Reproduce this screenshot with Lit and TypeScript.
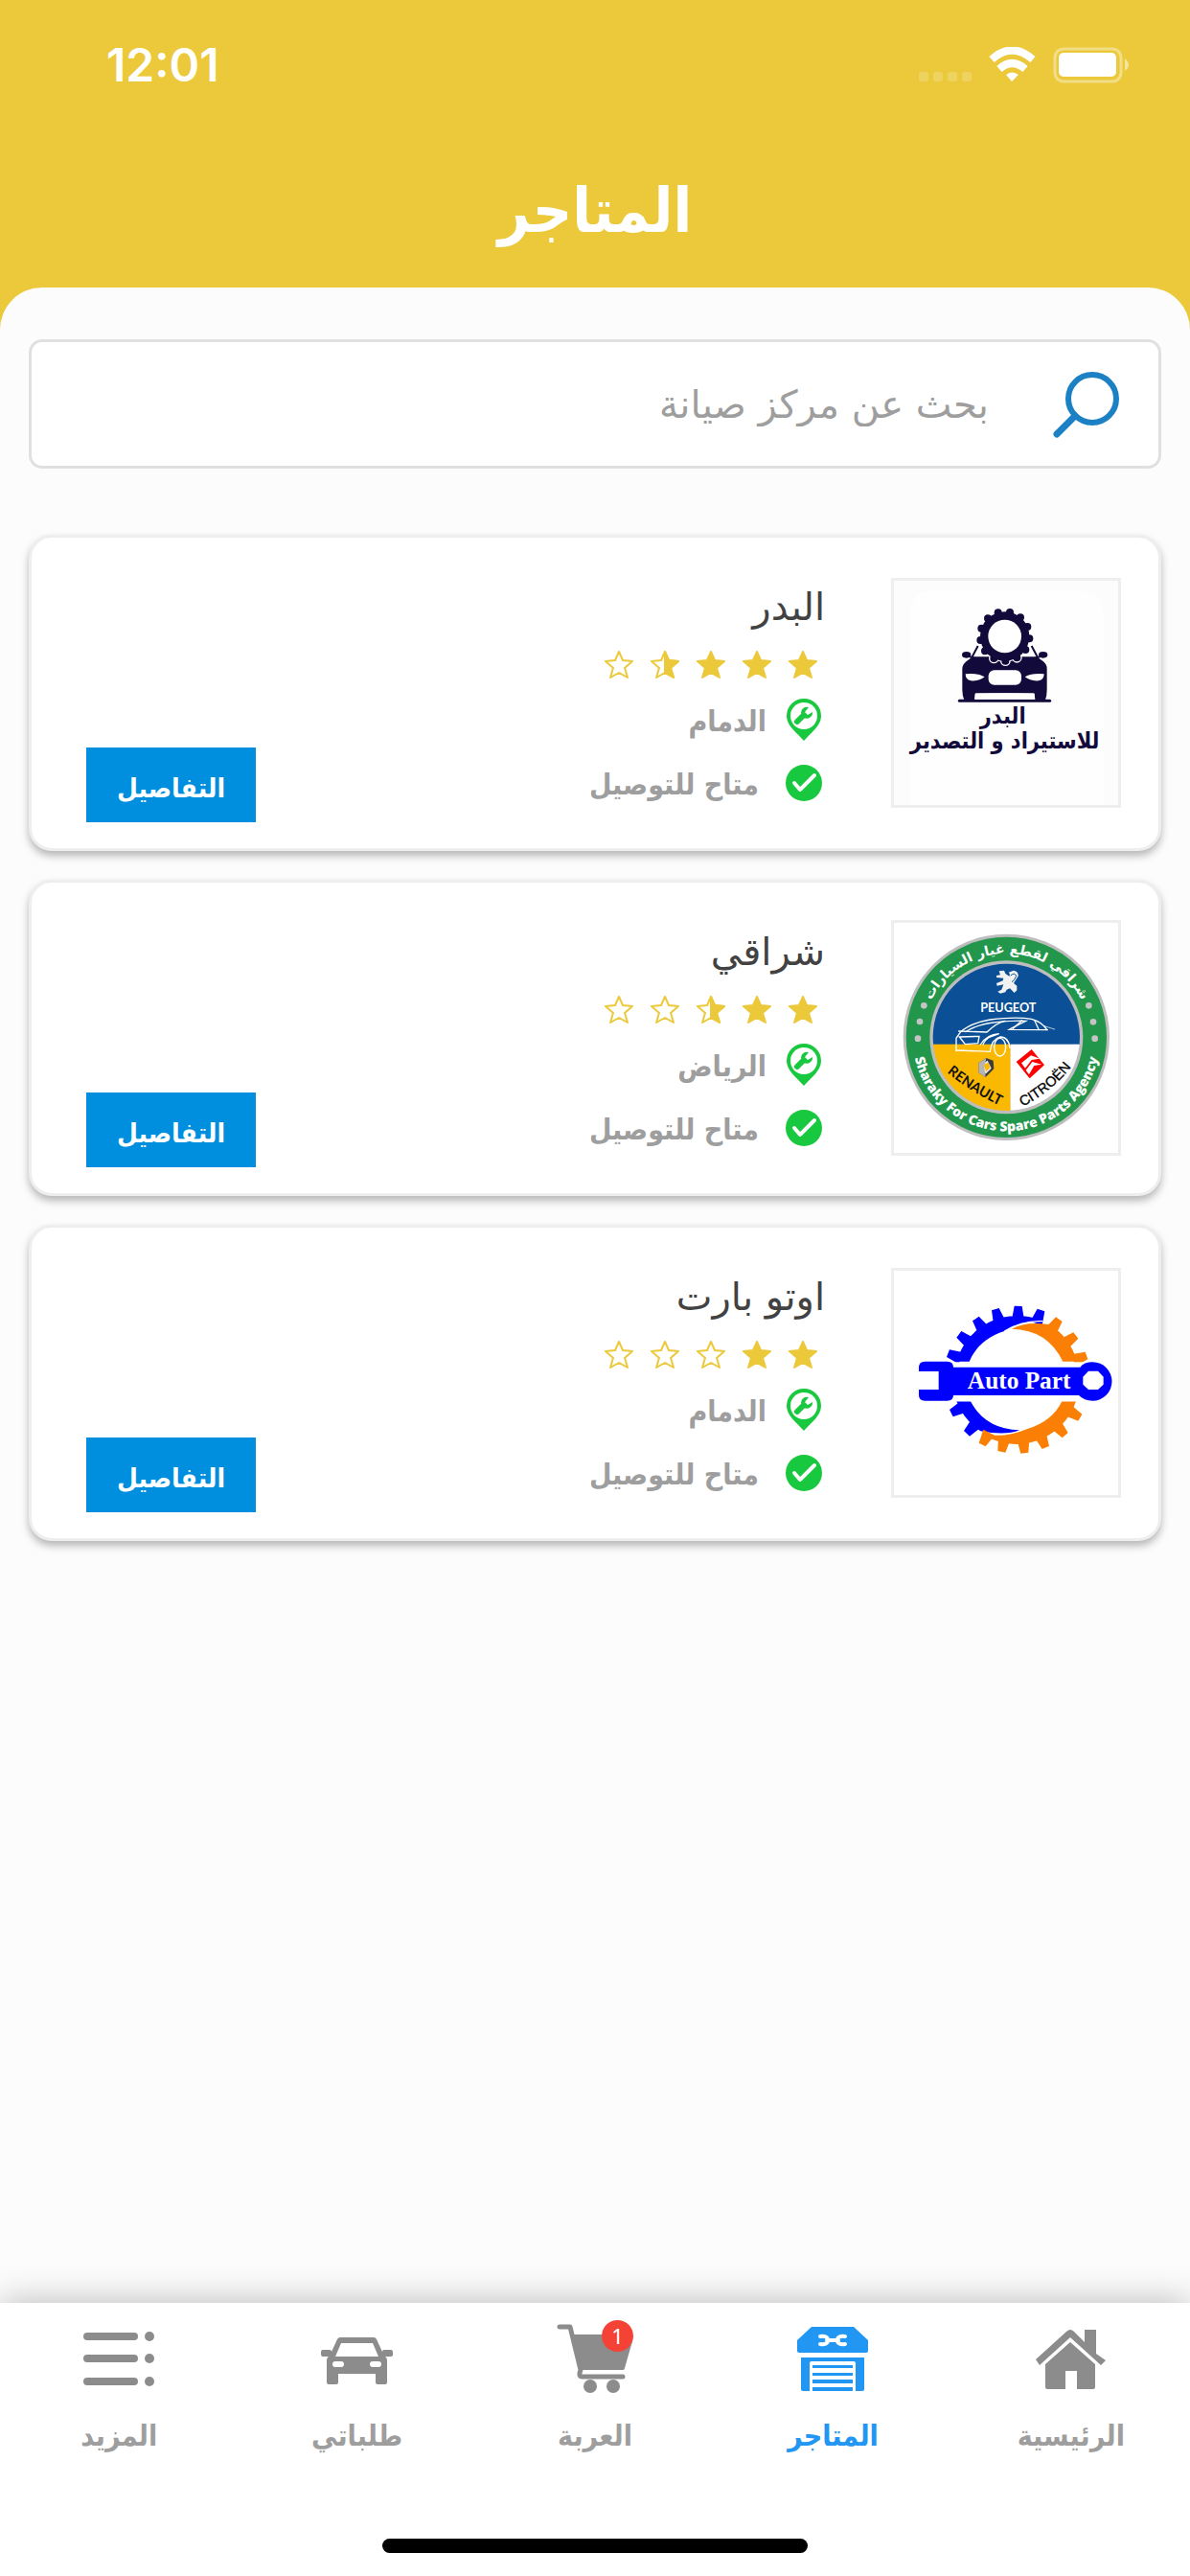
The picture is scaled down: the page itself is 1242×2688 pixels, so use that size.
import { LitElement, html, svg, css, type TemplateResult } from "lit";
import { customElement, property } from "lit/decorators.js";
import { classMap } from "lit/directives/class-map.js";

interface Store {
  name: string;
  rating: number;
  city: string;
  delivery: string;
  logo: TemplateResult;
}

interface Tab {
  label: string;
  icon: TemplateResult;
  active?: boolean;
  badge?: number;
}

const polar = (cx: number, cy: number, r: number, deg: number): [number, number] => {
  const a = (deg * Math.PI) / 180;
  return [Math.round(cx + r * Math.cos(a)), Math.round(cy + r * Math.sin(a))];
};

/* Thirteen round lobes around the wheel of the first store's badge. */
const lobes = (extra: number, fill: string) =>
  Array.from({ length: 13 }, (_, i) => {
    const [x, y] = polar(386, 222, 77, -78 + (i * 360) / 13);
    return svg`<circle cx=${x} cy=${y} r=${12 + extra} fill=${fill}></circle>`;
  });

const badrLogo = html`
  <svg viewBox="39 48 702 702" role="img" aria-label="البدر">
    <rect x="39" y="48" width="702" height="702" fill="#fcfcfc" />
    <path d="M92 750V150Q92 80 162 80H622Q694 80 694 150V750Z" fill="#fefefe" />
    <path d="M244 424H527" stroke="#120a3a" stroke-width="9" stroke-linecap="round" />
    <path d="M253 420V322Q254 310 266 300L286 286H486L506 300Q518 310 518 322V390Q518 410 512 424H482L478 400H294L290 424H260Q253 410 253 390Z" fill="#120a3a" />
    <path d="M302 252L283 288M470 252L489 288" stroke="#120a3a" stroke-width="6" fill="none" />
    <ellipse cx="266" cy="280" rx="14" ry="10" fill="#120a3a" />
    <ellipse cx="506" cy="280" rx="14" ry="10" fill="#120a3a" />
    <path d="M270 284L292 291M502 284L480 291" stroke="#120a3a" stroke-width="6" />
    <path d="M263 340Q300 336 323 349Q305 363 280 361Q263 358 263 340ZM509 340Q472 336 449 349Q467 363 492 361Q509 358 509 340Z" fill="#fff" />
    <rect x="335" y="328" width="103" height="46" rx="18" fill="#fff" />
    <path d="M293 402Q386 397 479 402V419H293Z" fill="#fff" />
    ${lobes(4, "#fff")}
    <circle cx="386" cy="222" r="80" fill="#fff" />
    ${lobes(0, "#120a3a")}
    <circle cx="386" cy="222" r="77" fill="#120a3a" />
    <circle cx="386" cy="222" r="52" fill="#fff" />
    <text x="380" y="495" class="badr">البدر</text>
    <text x="386" y="574" class="badr">للاستيراد و التصدير</text>
  </svg>
`;

const dots = [
  [133, 298], [120, 348], [114, 401],
  [649, 298], [663, 349], [668, 401],
];

const sharakyLogo = html`
  <svg viewBox="39 39 702 720" role="img" aria-label="شراقي">
    <defs>
      <path id="arc-top" d="M129 397A262 262 0 0 1 653 397" />
      <path id="arc-bottom" d="M97 397A294 294 0 0 0 685 397" />
      <path id="arc-renault" d="M196 500Q280 570 380 616" />
      <path id="arc-citroen" d="M442 614Q530 570 594 490" />
      <clipPath id="disc"><circle cx="391" cy="397" r="230" /></clipPath>
    </defs>
    <circle cx="391" cy="397" r="323" fill="#bdbdbd" />
    <circle cx="391" cy="397" r="314" fill="#22964b" />
    <circle cx="391" cy="397" r="240" fill="#bdbdbd" />
    <g clip-path="url(#disc)">
      <rect x="150" y="160" width="490" height="260" fill="#0b4f96" />
      <rect x="150" y="419" width="254" height="220" fill="#fab800" />
      <rect x="404" y="419" width="240" height="220" fill="#fff" />
    </g>
    ${dots.map(([x, y]) => svg`<circle cx=${x} cy=${y} r="10" fill="#c4c4c4"></circle>`)}
    <text class="ring-ar"><textPath href="#arc-top" startOffset="50%">شراقي لقطع غيار السيارات</textPath></text>
    <text class="ring-en"><textPath href="#arc-bottom" startOffset="50%">Sharaky For Cars Spare Parts Agency</textPath></text>
    <path d="M368 190L384 188L388 198L400 206Q404 198 398 194L414 188Q430 192 428 206Q420 218 414 228L424 236V250L416 258L402 244L392 248L388 256L372 260L364 254L376 248L382 232L362 236L360 228L380 220L382 212L360 210V204L372 202Z" fill="#f2f2f2" />
    <path d="M404 204Q418 192 422 206Q416 220 408 224" fill="none" stroke="#0b4f96" stroke-width="3" />
    <text x="397" y="317" class="peugeot">PEUGEOT</text>
    <g fill="none" stroke="#fff" stroke-width="4" stroke-linecap="round">
      <path d="M234 440V400L248 380Q280 352 340 342Q420 332 470 340Q505 350 518 374" />
      <path d="M264 380Q300 356 360 350Q420 344 452 346Q412 366 400 373L520 374" />
      <path d="M242 378L330 381Q360 352 386 346M412 370L440 344M480 346L492 372" />
      <path d="M244 396L306 394L302 416L262 419Z" />
      <path d="M310 420Q330 388 368 386L340 396Q324 404 318 420" />
      <path d="M234 438L340 442Q344 404 372 396Q398 396 402 430" />
      <path d="M510 362L542 372" stroke-width="2" />
      <ellipse cx="371" cy="428" rx="18" ry="28" />
    </g>
    <path d="M304 478L328 462L350 470L352 496L326 522L304 508Z" fill="#3c3c3c" />
    <path d="M312 482L332 470L344 494L326 512Z" fill="#e8e8e8" />
    <path d="M304 478L328 462L322 492L326 522L304 508Z" fill="#b5b5b5" />
    <path d="M320 484L334 476L340 492L328 504Z" fill="#fab800" />
    <path d="M422 474L470 435L510 484L464 526Z" fill="#ff0000" />
    <path d="M438 478L468 454L496 464L470 468L450 494ZM452 500L472 474L502 482L478 486L462 514Z" fill="#fff" />
    <text class="renault"><textPath href="#arc-renault" startOffset="50%">RENAULT</textPath></text>
    <text class="citroen"><textPath href="#arc-citroen" startOffset="50%">CITROËN</textPath></text>
  </svg>
`;

const tooth = (deg: number) => {
  const at = (r: number, d: number) => polar(424, 389, r, deg + d).join(" ");
  return `M${at(188, -6)}L${at(231, -3)}L${at(231, 3)}L${at(188, 6)}Z`;
};
const blueTeeth = [-71, -89, -107, -124, -142, -159, 153, 133].map(tooth).join("");
const orangeTeeth = [-55, -37, -19, 118, 102, 84, 67, 49, 31].map(tooth).join("");

const autoPartLogo = html`
  <svg viewBox="39 48 702 702" role="img" aria-label="اوتو بارت">
    <path d="${blueTeeth}M235 332A197 197 0 0 1 505 206Q440 203 385 237Q305 262 275 332ZM235 457H279Q325 543 432 547Q390 565 310 550A197 197 0 0 1 235 457Z" fill="#0000ff" />
    <path d="${orangeTeeth}M408 230Q450 205 525 216A197 197 0 0 1 612 332H568Q520 232 408 230ZM312 557Q380 575 455 544Q535 520 565 457H609A197 197 0 0 1 312 557Z" fill="#fb7f05" />
    <path d="M505 206Q440 203 385 237" fill="none" stroke="#fff" stroke-width="4" />
    <rect x="100" y="334" width="600" height="123" fill="#fff" />
    <path d="M117 350Q117 332 136 332H206Q225 332 225 350H622Q634 334 661 334A60 60 0 0 1 661 455Q634 455 618 438H225Q225 455 206 455H136Q117 455 117 438V420H179V363H117Z" fill="#0000ff" />
    <path d="M648 362H678L695 380V404L678 420H648L631 404V380Z" fill="#fff" />
    <text x="431" y="417" class="auto">Auto Part</text>
  </svg>
`;

const STAR = "M15 1L19 10L29 11L21 18L24 28L15 23L6 28L9 18L1 11L11 10Z";

@customElement("star-rating")
class StarRating extends LitElement {
  @property({ type: Number }) value = 0;

  static styles = css`
    :host { display: block; }
    .stars { display: flex; gap: 18px; padding: 0 8px; }
    svg { display: block; width: 30px; height: 30px; }
    .line { fill: none; stroke: #ecc93a; stroke-width: 2; stroke-linejoin: round; }
    .fill { fill: #ecc93a; stroke: #ecc93a; stroke-width: 2; stroke-linejoin: round; }
  `;

  private star(i: number) {
    const rest = this.value - i;
    return html`
      <svg viewBox="0 0 30 30" aria-hidden="true">
        ${rest >= 1
          ? svg`<path class="fill" d=${STAR}></path>`
          : svg`<path class="line" d=${STAR}></path>`}
        ${rest > 0 && rest < 1
          ? svg`<path class="fill" d="M15 1L19 10L29 11L21 18L24 28L15 23Z"></path>`
          : ""}
      </svg>
    `;
  }

  render() {
    return html`<div class="stars" role="img" aria-label=${`${this.value} / 5`}>
      ${[0, 1, 2, 3, 4].map((i) => this.star(i))}
    </div>`;
  }
}

@customElement("store-card")
class StoreCard extends LitElement {
  @property({ attribute: false }) store!: Store;

  static styles = css`
    :host { display: block; }
    .card {
      display: flex;
      align-items: center;
      box-sizing: border-box;
      min-height: 330px;
      padding: 24px 39px 24px 57px;
      border: 3px solid #eee;
      border-radius: 24px;
      background: #fff;
      box-shadow: 0 5px 8px rgba(0, 0, 0, 0.28);
    }
    .logo {
      flex: none;
      width: 234px;
      border: 3px solid #eee;
    }
    .logo svg { display: block; width: 100%; height: auto; }
    .info {
      flex: 1;
      align-self: flex-start;
      margin-inline-start: 69px;
      padding-top: 18px;
    }
    h2 {
      margin: 0;
      font-size: 40px;
      line-height: 60px;
      font-weight: 500;
      color: #424242;
    }
    star-rating { margin: 16px 0 20px; }
    .fact {
      display: flex;
      align-items: center;
      gap: 20px;
      height: 44px;
      margin: 0 3px 22px;
      font-family: "DejaVu Sans Condensed", "DejaVu Sans", sans-serif;
      font-size: 30px;
      line-height: 40px;
      font-weight: 700;
      color: #9e9e9e;
    }
    .fact + .fact { gap: 28px; }
    .fact svg { flex: none; width: 38px; height: 44px; }
    .fact span { padding-top: 4px; }
    .details {
      align-self: flex-end;
      width: 177px;
      height: 78px;
      margin-bottom: 3px;
      padding: 8px 0 0;
      border: 0;
      background: #008fdf;
      color: #fff;
      font-family: "DejaVu Sans Condensed", "DejaVu Sans", sans-serif;
      font-size: 28px;
      font-weight: 700;
      line-height: 44px;
    }
    .badr { font-family: "DejaVu Sans Condensed", "DejaVu Sans", sans-serif; font-size: 70px; font-weight: 700; text-anchor: middle; direction: rtl; fill: #120a3a; }
    .ring-ar { font-family: "DejaVu Sans", sans-serif; font-size: 42px; font-weight: 700; text-anchor: middle; direction: rtl; fill: #fff; }
    .ring-en { font-family: "Open Sans", sans-serif; font-size: 42px; font-weight: 800; text-anchor: middle; direction: ltr; fill: #fff; }
    .peugeot { font-family: Lato, sans-serif; font-size: 38px; font-weight: 700; text-anchor: middle; direction: ltr; fill: #fff; }
    .renault { font-family: Lato, sans-serif; font-size: 44px; font-weight: 700; text-anchor: middle; direction: ltr; fill: #111; }
    .citroen { font-family: "Liberation Sans", sans-serif; font-size: 44px; text-anchor: middle; direction: ltr; fill: #000; stroke: #000; stroke-width: 1; }
    .auto { font-family: "Liberation Serif", serif; font-size: 76px; font-weight: 700; text-anchor: middle; direction: ltr; fill: #fff; }
  `;

  render() {
    const s = this.store;
    return html`
      <article class="card">
        <div class="logo">${s.logo}</div>
        <div class="info">
          <h2>${s.name}</h2>
          <star-rating .value=${s.rating}></star-rating>
          <div class="fact">
            <svg viewBox="0 0 38 44" aria-hidden="true">
              <path d="M19 0A18 18 0 0 1 37 18C37 28 27 35 19 44C11 35 1 28 1 18A18 18 0 0 1 19 0Z" fill="#18c83f" />
              <circle cx="19" cy="18" r="14" fill="#fff" />
              <path d="M12 24L17 19" stroke="#18c83f" stroke-width="6" stroke-linecap="round" />
              <path d="M24 9A6 6 0 1 0 28 14L23 17L20 14Z" fill="#18c83f" />
            </svg>
            <span>${s.city}</span>
          </div>
          <div class="fact">
            <svg viewBox="0 0 38 44" aria-hidden="true">
              <circle cx="19" cy="22" r="19" fill="#18c83f" />
              <path d="M9 22L15 29L30 14" fill="none" stroke="#fff" stroke-width="4" stroke-linecap="round" stroke-linejoin="round" />
            </svg>
            <span>${s.delivery}</span>
          </div>
        </div>
        <button class="details" type="button">التفاصيل</button>
      </article>
    `;
  }
}

@customElement("app-root")
class AppRoot extends LitElement {
  private stores: Store[] = [
    { name: "البدر", rating: 3.5, city: "الدمام", delivery: "متاح للتوصيل", logo: badrLogo },
    { name: "شراقي", rating: 2.5, city: "الرياض", delivery: "متاح للتوصيل", logo: sharakyLogo },
    { name: "اوتو بارت", rating: 2, city: "الدمام", delivery: "متاح للتوصيل", logo: autoPartLogo },
  ];

  private tabs: Tab[] = [
    {
      label: "الرئيسية",
      icon: svg`<path d="M37 6Q39 6 41 8L52 19V6H64V31L74 38L69 43L37 14L5 43L1 37L33 8Q35 6 37 6Z"></path>
        <path d="M37 19L63 42V66Q63 68 61 68H44V49H32V68H13Q11 68 11 66V42Z"></path>`,
    },
    {
      label: "المتاجر",
      active: true,
      icon: svg`<path d="M16 3H60L75 17V28Q75 30 73 30H3Q1 30 1 28V17Z"></path>
        <path d="M5 35H71V68Q71 70 69 70H62V41Q62 39 60 39H16Q14 39 14 41V70H7Q5 70 5 68Z"></path>
        <path d="M17 43H59V46H17ZM17 51H59V54H17ZM17 58H59V62H17ZM17 66H59V70H17Z"></path>
        <path d="M25 13Q33 12 33 17Q33 22 25 21M51 13Q43 12 43 17Q43 22 51 21M32 17H44" fill="none" stroke="#fff" stroke-width="4" stroke-linecap="round"></path>`,
    },
    {
      label: "العربة",
      badge: 1,
      icon: svg`<path d="M14 11H77V18L69 46Q69 48 67 48H22Z"></path>
        <path d="M1 3H12L23 48Q20 55 25 55H67" fill="none" stroke="currentColor" stroke-width="5" stroke-linecap="round" stroke-linejoin="round"></path>
        <circle cx="33" cy="65" r="7"></circle><circle cx="57" cy="65" r="7"></circle>`,
    },
    {
      label: "طلباتي",
      icon: svg`<path fill-rule="evenodd" d="M17 16Q18 14 20 14H55Q57 14 58 16L64 29Q64 27 66 27H73Q75 27 75 29V32Q75 34 73 34H67Q69 35 69 38V61Q69 63 67 63H59Q57 63 57 61V52H18V61Q18 63 16 63H8Q6 63 6 61V38Q6 35 8 34H2Q0 34 0 32V29Q0 27 2 27H9Q11 27 11 29ZM21 20L15 34H60L54 20ZM15 39Q12 39 12 42Q12 45 15 45H21Q24 45 24 42Q24 39 21 39ZM54 39Q51 39 51 42Q51 45 54 45H60Q63 45 63 42Q63 39 60 39Z"></path>`,
    },
    {
      label: "المزيد",
      icon: svg`<path d="M5 13H54M5 36H54M5 60H54" stroke="currentColor" stroke-width="8" stroke-linecap="round"></path>
        <circle cx="70" cy="13" r="5"></circle><circle cx="70" cy="36" r="5"></circle><circle cx="70" cy="60" r="5"></circle>`,
    },
  ];

  static styles = css`
    :host {
      display: flex;
      flex-direction: column;
      min-height: 100vh;
      background: #ecc93a;
      font-family: "DejaVu Sans", sans-serif;
      direction: rtl;
    }
    .status {
      display: flex;
      align-items: center;
      direction: ltr;
      height: 136px;
      padding: 0 64px 0 111px;
      color: #fff;
    }
    .time {
      flex: 1;
      font: 600 48px/56px Inter, sans-serif;
    }
    .signals { width: 220px; height: 38px; }
    h1 {
      margin: 0;
      height: 164px;
      color: #fff;
      font-family: "DejaVu Sans Condensed", "DejaVu Sans", sans-serif;
      font-size: 64px;
      line-height: 168px;
      font-weight: 700;
      text-align: center;
    }
    main {
      flex: 1;
      padding: 54px 30px 30px;
      border-radius: 44px 44px 0 0;
      background: #fcfcfc;
    }
    .search {
      display: flex;
      align-items: center;
      box-sizing: border-box;
      height: 135px;
      padding: 0 40px;
      border: 3px solid #e0e0e0;
      border-radius: 14px;
      background: #fff;
    }
    .search svg { flex: none; width: 70px; height: 70px; }
    .search input {
      flex: 1;
      min-width: 0;
      margin-inline-start: 67px;
      padding: 0;
      border: 0;
      outline: 0;
      background: none;
      font: 400 40px/60px "DejaVu Sans", sans-serif;
      color: #424242;
    }
    .search input::placeholder { color: #9e9e9e; opacity: 1; }
    .list {
      display: flex;
      flex-direction: column;
      gap: 30px;
      margin-top: 69px;
    }
    nav {
      display: grid;
      grid-template-columns: repeat(5, 1fr);
      padding-top: 22px;
      background: #fff;
      box-shadow: 0 0 36px rgba(0, 0, 0, 0.28);
    }
    nav a {
      display: flex;
      flex-direction: column;
      align-items: center;
      gap: 20px;
      color: #9e9e9e;
      text-decoration: none;
      font-family: "DejaVu Sans Condensed", "DejaVu Sans", sans-serif;
      font-size: 30px;
      line-height: 50px;
      font-weight: 700;
    }
    nav a.active { color: #2196f3; }
    .icon { position: relative; width: 76px; height: 72px; color: #8c8c8c; }
    .active .icon { color: #2196f3; }
    .icon svg { display: block; width: 76px; height: 72px; overflow: visible; fill: currentColor; }
    .badge {
      position: absolute;
      top: -4px;
      left: 45px;
      width: 33px;
      height: 33px;
      border-radius: 50%;
      background: #f44336;
      color: #fff;
      font: 400 22px/33px "Noto Sans", sans-serif;
      text-align: center;
    }
    .home {
      display: flex;
      justify-content: center;
      padding: 82px 0 24px;
      background: #fff;
      z-index: 1;
    }
    .home div { width: 444px; height: 15px; border-radius: 8px; background: #000; }
  `;

  render() {
    return html`
      <header>
        <div class="status">
          <span class="time">12:01</span>
          <svg class="signals" viewBox="0 0 220 38" aria-hidden="true">
            <g fill="#fff" fill-opacity="0.2">
              <rect x="1" y="26" width="10" height="10" rx="3" />
              <rect x="16" y="26" width="10" height="10" rx="3" />
              <rect x="31" y="26" width="10" height="10" rx="3" />
              <rect x="46" y="26" width="10" height="10" rx="3" />
            </g>
            <g fill="none" stroke="#fff">
              <path d="M77 13Q98 -6 120 13" stroke-width="8" />
              <path d="M85 23Q98 11 112 23" stroke-width="8" />
            </g>
            <path d="M92 29Q98 24 105 29L98 36Z" fill="#fff" />
            <rect x="143" y="2" width="69" height="34" rx="9" fill="none" stroke="#fff" stroke-opacity="0.4" stroke-width="3" />
            <rect x="147" y="6" width="60" height="25" rx="5" fill="#fff" />
            <path d="M216 12Q224 19 216 25Z" fill="#fff" fill-opacity="0.5" />
          </svg>
        </div>
        <h1>المتاجر</h1>
      </header>
      <main>
        <label class="search">
          <svg viewBox="0 0 70 70" aria-hidden="true">
            <circle cx="41" cy="29" r="25" fill="none" stroke="#1b80c4" stroke-width="6" />
            <path d="M23 47L4 66" stroke="#1b80c4" stroke-width="7" stroke-linecap="round" />
          </svg>
          <input type="search" aria-label="بحث" placeholder="بحث عن مركز صيانة" />
        </label>
        <section class="list">
          ${this.stores.map((s) => html`<store-card .store=${s}></store-card>`)}
        </section>
      </main>
      <nav>
        ${this.tabs.map(
          (t) => html`
            <a href="#" class=${classMap({ active: !!t.active })}>
              <span class="icon">
                <svg viewBox="0 0 76 72" aria-hidden="true">${t.icon}</svg>
                ${t.badge ? html`<span class="badge">${t.badge}</span>` : ""}
              </span>
              <span>${t.label}</span>
            </a>
          `
        )}
      </nav>
      <div class="home"><div></div></div>
    `;
  }
}
